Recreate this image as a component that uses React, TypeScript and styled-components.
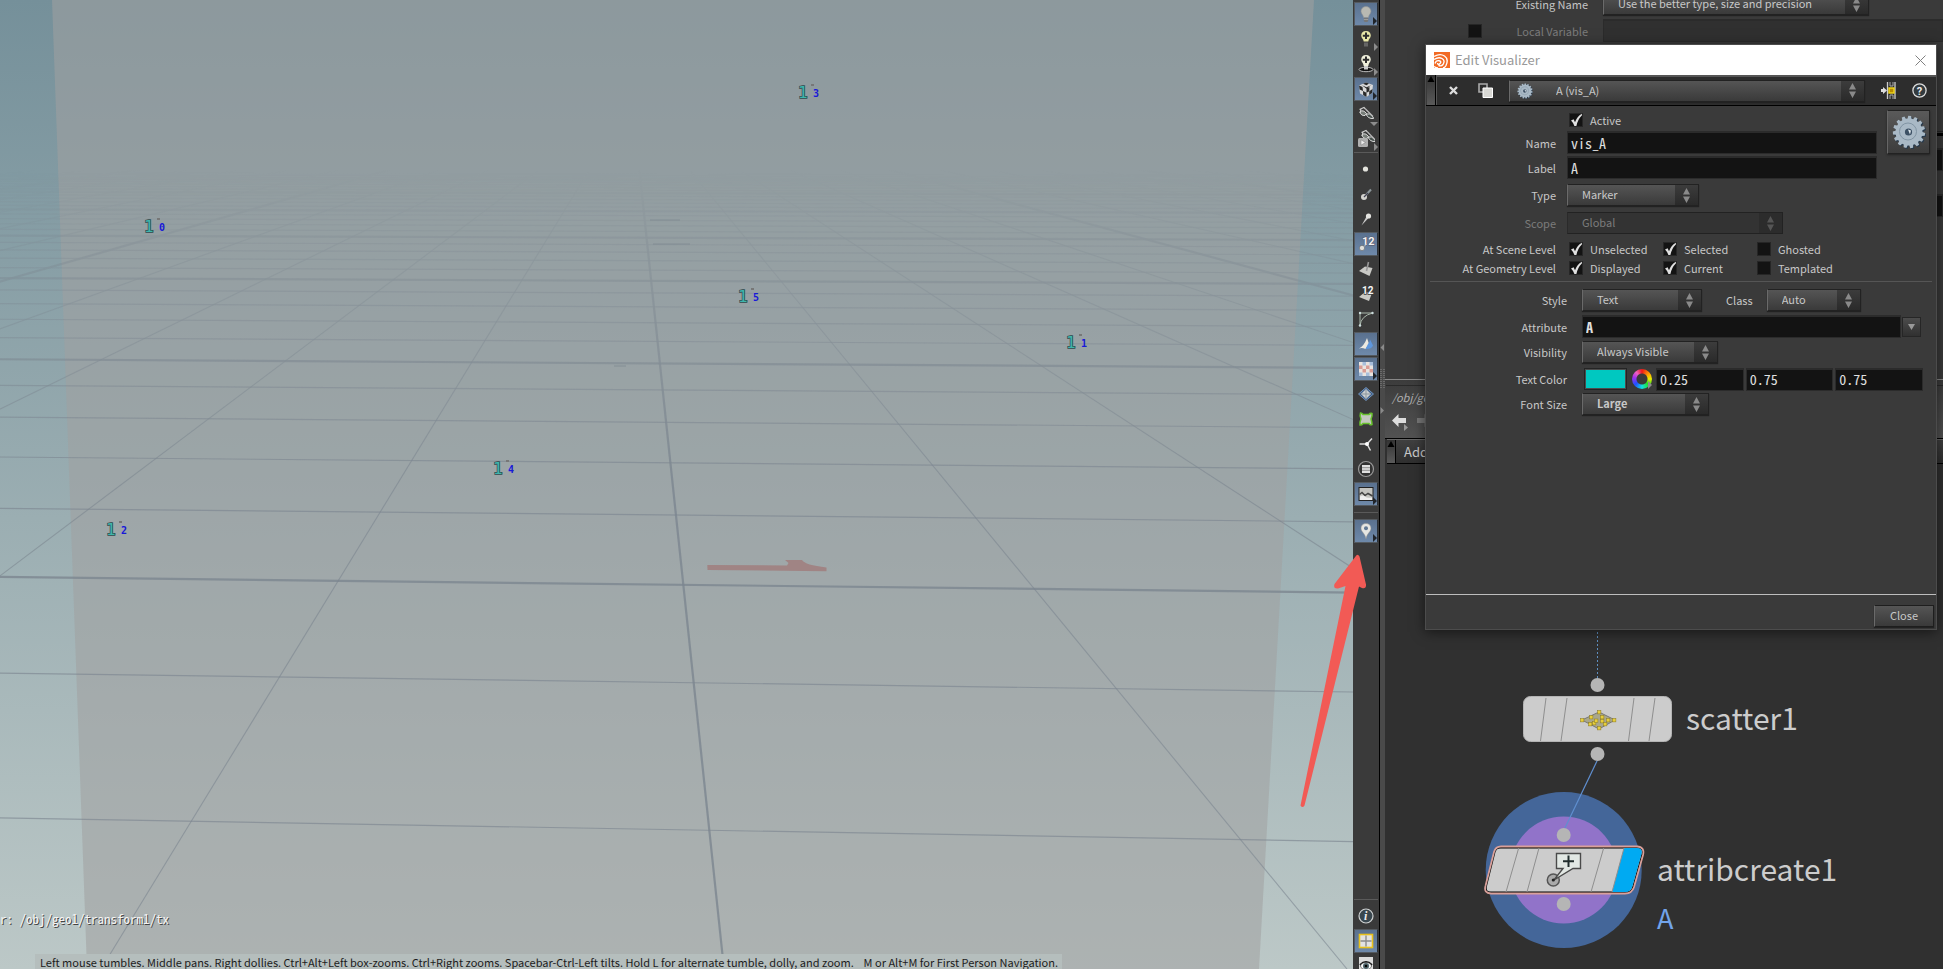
import React from 'react';
import styled, { createGlobalStyle, css } from 'styled-components';

const UI_FONT = '"Noto Sans CJK SC", "Open Sans", sans-serif';
const MONO_FONT = '"Noto Sans Mono CJK SC", "Liberation Mono", monospace';

const GlobalStyle = createGlobalStyle`
  * { box-sizing: border-box; }
  html, body, #root { height: 100%; }
  body { margin: 0; background: #3a3a3a; overflow: hidden; }
  button, input, select { font: inherit; color: inherit; margin: 0; padding: 0; border: 0; border-radius: 0; }
  svg { display: block; }
`;

/* ---------- page frame ---------- */

const Page = styled.div`
  position: relative;
  display: flex;
  height: 100vh;
  overflow: hidden;
  font-family: ${UI_FONT};
  font-size: 11px;
  line-height: 16px;
  color: #c8c8c8;
`;

const Viewport = styled.main`
  position: relative;
  flex: 1;
  min-width: 0;
  display: flex;
  flex-direction: column;
  justify-content: flex-end;
  overflow: hidden;
  background: linear-gradient(#75909a, #bcc8c7);
`;

const SceneDrawing = styled.svg`
  position: absolute;
  inset: 0;
  width: 100%;
  height: 100%;
`;

const PathReadout = styled.div`
  position: relative;
  margin-bottom: 27px;
  font-family: ${MONO_FONT};
  font-size: 13px;
  line-height: 16px;
  color: #f4f4f4;
  text-shadow: 1px 1px 0 #444;
  white-space: pre;
`;

const HintBar = styled.div`
  position: relative;
  align-self: flex-start;
  margin-left: 35px;
  padding: 2px 4px 0 5px;
  background: #b5bebd;
  color: #1c1c1c;
  line-height: 13px;
  white-space: pre;
`;

/* ---------- display toolbar ---------- */

const Toolbar = styled.nav`
  display: flex;
  flex-direction: column;
  gap: 1px;
  width: 26px;
  padding: 2px 1px 0;
  background: #3a3a3a;
  overflow: hidden;
`;

const ToolButton = styled.button<{ $on?: boolean; $cut?: boolean }>`
  position: relative;
  display: flex;
  align-items: flex-start;
  justify-content: center;
  flex: none;
  height: ${p => (p.$cut ? 15 : 24)}px;
  padding-top: 2px;
  background: transparent;
  ${p => p.$on && css`
    background: linear-gradient(#5a718f, #6e89aa);
    border: 1px solid #545a60;
    border-right-color: #2a3038;
    padding-top: 1px;
  `}
`;

const MenuTick = styled.i<{ $dark?: boolean; $down?: boolean }>`
  position: absolute;
  right: 0;
  bottom: 0;
  border: 4px solid transparent;
  border-left-color: ${p => (p.$dark ? '#20242a' : '#8c8c8c')};
  border-right-width: 0;
  ${p => p.$down && css`
    border: 4px solid transparent;
    border-top-color: #8c8c8c;
    border-bottom-width: 0;
  `}
`;

const ToolDivider = styled.hr<{ $loose?: boolean }>`
  flex: none;
  width: 24px;
  height: 1px;
  margin: ${p => (p.$loose ? '5px 0 5px' : '0 0 3px')};
  border: 0;
  background: #5a5a5a;
`;

const Spacer = styled.div`
  flex: 1;
`;

const Splitter = styled.div`
  display: flex;
  flex-direction: column;
  align-items: center;
  width: 6px;
  padding-top: 344px;
  border-left: 1px solid #000;
  background: #4a4a4a;
`;

/* ---------- right column ---------- */

const RightColumn = styled.aside`
  display: flex;
  flex-direction: column;
  width: 558px;
  background: #303030;
`;

const ParamPane = styled.section`
  flex: none;
  height: 379px;
  overflow: hidden;
  background: #3a3a3a;
`;

const ParamRow = styled.div<{ $top?: number; $height: number; $indent?: boolean }>`
  display: flex;
  align-items: center;
  height: ${p => p.$height}px;
  margin-top: ${p => p.$top || 0}px;
  padding-left: ${p => (p.$indent ? 218 : 0)}px;
`;

const ParamLabel = styled.label<{ $dim?: boolean }>`
  width: 106px;
  margin-right: 15px;
  text-align: right;
  color: ${p => (p.$dim ? '#7c7c7c' : '#c4c4c4')};
`;

const ParamIndent = styled.div`
  display: flex;
  justify-content: flex-end;
  width: 97px;
`;

const TabLine = styled.div`
  height: 5px;
  margin: 89px 0 0 218px;
  border-top: 1px solid #262626;
  border-bottom: 3px solid #000;
`;

const NetHeader = styled.header`
  flex: none;
  display: flex;
  flex-direction: column;
  height: 60px;
  border-top: 1px solid #888;
  border-bottom: 1px solid #000;
  background: linear-gradient(#3c3c3c, #525252);
`;

const NetPath = styled.a`
  margin: 5px 0 0 1px;
  padding: 3px 6px 0;
  height: 24px;
  border-top: 1px solid #2a2a2a;
  color: #b0b0b0;
  font-style: italic;
  text-decoration: none;
`;

const NavRow = styled.div`
  display: flex;
  align-items: center;
  gap: 8px;
  padding: 5px 7px 0;
`;

const PlainButton = styled.button`
  display: flex;
  background: transparent;
`;

const AddBar = styled.div`
  flex: none;
  display: flex;
  align-items: stretch;
  height: 25px;
  margin-left: 2px;
  border-bottom: 1px solid #000;
  border-top: 1px solid #666;
  background: linear-gradient(#404040, #2f2f2f);
  font-size: 13px;
`;

const Handle = styled.div`
  width: 9px;
  border-right: 1px solid #000;
  background: linear-gradient(#333, #5a5a5a);
`;

const AddMenu = styled.button`
  background: transparent;
  padding-left: 8px;
  line-height: 22px;
`;

const Network = styled.section`
  flex: 1;
  min-height: 0;
  background: #303030;
`;

const NetworkDrawing = styled.svg`
  width: 100%;
  height: 100%;
`;

/* ---------- dialog ---------- */

const Dialog = styled.section`
  position: absolute;
  top: 44px;
  right: 6px;
  width: 512px;
  border: 1px solid #4c4c4c;
  background: #3a3a3a;
  box-shadow: 0 2px 12px rgba(0, 0, 0, 0.55);
`;

const TitleBar = styled.header`
  display: flex;
  align-items: center;
  height: 30px;
  padding: 0 10px 0 8px;
  background: #fff;
`;

const Title = styled.h1`
  flex: 1;
  margin: 0 0 0 5px;
  font-size: 13px;
  line-height: 20px;
  font-weight: 400;
  color: #999;
`;

const ActionBar = styled.div`
  display: flex;
  height: 31px;
  padding-left: 1px;
  border-bottom: 1px solid #000;
`;

const Actions = styled.div`
  flex: 1;
  display: flex;
  align-items: center;
  padding: 0 9px 1px 12px;
  border-top: 2px solid #555;
  border-left: 1px solid #555;
  background: #2d2d2d;
`;

const ActionSelectSlot = styled.div`
  position: relative;
  flex: 1;
  margin: 0 16px;

  > svg {
    position: absolute;
    left: 8px;
    top: 3px;
    pointer-events: none;
  }
`;

const ActionGap = styled.div<{ $wide?: boolean }>`
  width: ${p => (p.$wide ? 20 : 16)}px;
`;

const Body = styled.form`
  min-height: 488px;
`;

const TopForm = styled.div`
  display: flex;
  align-items: flex-start;
  padding-top: 7px;
`;

const TopFields = styled.div`
  flex: 1;
`;

const GearButton = styled.button`
  display: flex;
  align-items: center;
  justify-content: center;
  width: 43px;
  height: 44px;
  margin: -3px 6px 0 10px;
  border: 1px solid #222;
  border-left-color: #666;
  background: linear-gradient(#5a5a5a, #3c3c3c);
  box-shadow: 0 1px 2px #222;
`;

const Row = styled.div<{ $height?: number; $gap?: number }>`
  display: flex;
  align-items: center;
  height: ${p => p.$height || 22}px;
  margin-top: ${p => p.$gap || 0}px;
`;

const RowLabel = styled.label<{ $wide?: boolean; $dim?: boolean }>`
  flex: none;
  width: ${p => (p.$wide ? 141 : 130)}px;
  margin-right: ${p => (p.$wide ? 15 : 11)}px;
  text-align: right;
  color: ${p => (p.$dim ? '#7c7c7c' : '#c8c8c8')};
`;

const InlineLabel = styled.label`
  margin: 0 14px 0 24px;
`;

const TextField = styled.input<{ $bold?: boolean }>`
  min-width: 0;
  flex: 1;
  height: 23px;
  padding: 0 2px 1px 3px;
  border: 1px solid #2b2b2b;
  border-top: 2px solid #2b2b2b;
  background: #131313;
  color: #e0e0e0;
  font-family: ${MONO_FONT};
  font-size: 14px;
  font-weight: ${p => (p.$bold ? 700 : 400)};
  outline: 0;

  &:disabled {
    background: #303030;
  }
`;

const SelectFrame = styled.div<{ $width?: number; $dim?: boolean }>`
  display: grid;
  grid-template-columns: 1fr 23px;
  flex: none;
  width: ${p => (p.$width ? `${p.$width}px` : '100%')};
  height: 22px;
  border: 1px solid #222;
  border-left-color: ${p => (p.$dim ? '#2a2a2a' : '#6a6a6a')};
  background: ${p => (p.$dim ? '#333' : 'linear-gradient(#555, #3a3a3a)')};
  box-shadow: ${p => (p.$dim ? 'none' : '0 1px 1px #222')};
  color: ${p => (p.$dim ? '#7c7c7c' : '#c8c8c8')};
`;

const NativeSelect = styled.select<{ $inset: number; $bold?: boolean }>`
  grid-area: 1 / 1 / 2 / 3;
  appearance: none;
  min-width: 0;
  padding: 0 0 2px ${p => p.$inset}px;
  background: transparent;
  font-weight: ${p => (p.$bold ? 700 : 400)};
  line-height: 18px;
  outline: 0;
  opacity: 1;
`;

const SpinArrows = styled.span<{ $dim?: boolean }>`
  grid-area: 1 / 2 / 2 / 3;
  display: flex;
  align-items: center;
  justify-content: center;
  background: ${p => (p.$dim ? '#2c2c2c' : 'linear-gradient(#3c3c3c, #2a2a2a)')};
  color: ${p => (p.$dim ? '#555' : '#8a8a8a')};
  pointer-events: none;
`;

const CheckLabel = styled.label`
  display: flex;
  align-items: center;
  gap: 7px;
  width: 94px;
  padding-left: 2px;
`;

const CheckCell = styled.span`
  display: grid;
  width: 14px;
  height: 14px;

  > * { grid-area: 1 / 1; }
  > svg { overflow: visible; pointer-events: none; }
`;

const CheckInput = styled.input`
  appearance: none;
  width: 14px;
  height: 14px;
  border: 1px solid #262626;
  background: #131313;
`;

const Rule = styled.hr`
  height: 1px;
  margin: 6px 4px 7px;
  border: 0;
  background: #555;
`;

const DropButton = styled.button`
  display: flex;
  align-items: center;
  justify-content: center;
  width: 19px;
  height: 20px;
  margin: 0 15px 0 1px;
  border: 1px solid #262626;
  background: linear-gradient(#4c4c4c, #303030);
`;

const Swatch = styled.button`
  width: 43px;
  height: 22px;
  margin: 0 5px 0 2px;
  border: 2px solid #4c4c4c;
  outline: 1px solid #242424;
  outline-offset: -1px;
  background: #00c8c0;
`;

const Wheel = styled.button`
  position: relative;
  width: 20px;
  height: 20px;
  margin-right: 4px;
  border-radius: 50%;
  background:
    radial-gradient(circle, #3a3a3a 5px, transparent 6px),
    conic-gradient(#f01818, #ffb000 60deg, #e8f000 90deg, #20e020 130deg, #10e0e0 180deg, #2050ff 230deg, #a030f0 280deg, #f060c0 320deg, #f01818);
`;

const ColorFields = styled.div`
  display: flex;
  gap: 2px;
  width: 267px;
`;

const Footer = styled.footer`
  display: flex;
  justify-content: flex-end;
  padding: 10px 2px 2px;
  border-top: 1px solid #bdbdbd;
`;

const CloseButton = styled.button`
  width: 60px;
  height: 22px;
  padding-bottom: 2px;
  border: 1px solid #1e1e1e;
  border-left-color: #6a6a6a;
  background: linear-gradient(#555, #3a3a3a);
  box-shadow: 0 1px 1px #222;
`;

const PointerArrow = styled.svg`
  position: absolute;
  top: 552px;
  right: 574px;
  pointer-events: none;
`;

/* ---------- small drawings ---------- */

const Arrows = () => (
  <svg width="7" height="15" viewBox="0 0 7 15" fill="currentColor">
    <path d="M3.5 0 7 6.5H0zM3.5 15 0 8.5h7z" />
  </svg>
);

const toothPath = (() => {
  const n = 15;
  let d = '';
  for (let i = 0; i < n; i++) {
    const at = (f: number, r: number) => {
      const a = ((i + f) / n) * Math.PI * 2;
      return `${(17 + Math.cos(a) * r).toFixed(2)} ${(17 + Math.sin(a) * r).toFixed(2)}`;
    };
    d += `${i ? 'L' : 'M'}${at(0, 13.5)}L${at(0.14, 16.2)}L${at(0.56, 16.2)}L${at(0.7, 13.5)}`;
  }
  return d + 'Z';
})();

const Gear = ({ size }: { size: number }) => (
  <svg width={size} height={size} viewBox="0 0 34 34">
    <path d={toothPath} transform="translate(1 1)" fill="#26394c" />
    <path d={toothPath} fill="#a9b9c6" />
    <circle cx="16" cy="16.5" r="8.5" fill="none" stroke="#8295a4" />
    <circle cx="16.5" cy="17" r="3.6" fill="#3c5064" />
    <path d="M16 14.5l3 1-1 4z" fill="#dfe8ee" />
  </svg>
);

const CheckMark = () => (
  <svg width="14" height="14" viewBox="0 0 14 14">
    <path d="M2 7.5 4.6 6.2 6 9.2Q8 3.5 12.8 0.8L13 2.2Q8.6 6.6 7.4 13H5.400Q4.400 9.800 2 7.500z" fill="#e0e0e0" />
  </svg>
);

const TriUp = () => (
  <svg width="8" height="10" viewBox="0 0 8 10"><path d="M4 1 7.5 7H.5z" fill="#000" /></svg>
);

const Glass = () => (
  <g>
    <path d="M2.500 4.500 7 2.500 8.500 4M4 4.500 3 8" stroke="#ccc" strokeWidth="1.200" />
    <path d="M3 7Q6 4 9.500 8.500L8 10.500Q4 11 3 7z" fill="#777d78" stroke="#ddd" />
    <path d="M9 9Q13 7.500 16 12L16.500 13.500Q11 14 9 9z" fill="#46504c" stroke="#ddd" />
    <path d="M8.500 4 16 11.500" stroke="#bbb" strokeWidth="1.200" />
  </g>
);

const icons: Record<string, React.ReactNode> = {
  bulb: (
    <>
      <path d="M9 1.500c3 0 5 2.200 5 4.800 0 2.500-2.300 3.600-2.500 6.200h-5C6.300 9.900 4 8.800 4 6.300 4 3.700 6 1.500 9 1.500z" fill="#b9b9b2" stroke="#8b8f90" strokeWidth=".6" />
      <path d="M6.800 13h4.400v3l-1 1H7.800l-1-1z" fill="#777" />
      <path d="M6.800 14.500h4.400" stroke="#aaa" strokeWidth=".7" />
    </>
  ),
  bulbAdd: (
    <>
      <path d="M9 1c3 0 4.800 2 4.800 4.500S11.500 9 11.300 11.500H6.700C6.500 9 4.200 8 4.200 5.500S6 1 9 1z" fill="#e9e8a8" />
      <path d="M9 2.500v6.500M5.800 5.700h6.400" stroke="#2e2e2e" strokeWidth="2" />
      <path d="M7 12.500h4v4H7z" fill="#666" />
    </>
  ),
  bulbRing: (
    <>
      <ellipse cx="9" cy="14.500" rx="7" ry="2.200" fill="#111" stroke="#bbb" />
      <path d="M9 0c3 0 4.800 2 4.800 4.500S11.500 8 11.300 11H6.700C6.500 8 4.200 7 4.200 4.500S6 0 9 0z" fill="#f0f0dc" />
      <path d="M9 1.500V8M5.800 4.700h6.400" stroke="#2e2e2e" strokeWidth="2" />
      <path d="M7 11h4v3.500H7z" fill="#ccc" />
    </>
  ),
  cube: (
    <>
      <path d="M9 2.500 16 5 15 13 9.500 17 3 13.500 2 5.500z" fill="#d9d9d9" />
      <path d="M6 3.700 9 2.500 12 3.600 9.500 5.200zM2 5.500 5.500 7 6 11 2.600 9.500zM6 11 9.500 12.800V17L6.200 15.100zM9.500 8.500l3-1.500-.2 4.200-2.800 1.600zM12.300 11.200 15.500 9 15 13l-2.900 2zM5 5.300 9.500 7.300 14 5.300 9.500 8.800z" fill="#2a2a2a" />
    </>
  ),
  glasses: <Glass />,
  glassesPlay: (
    <>
      <g transform="translate(2 -2)"><Glass /></g>
      <rect x="1" y="8" width="10" height="9" rx="1.500" fill="#b0b0b0" />
      <path d="M4 9.800 8.500 12.500 4 15.200z" fill="#eee" stroke="#777" strokeWidth=".5" />
    </>
  ),
  point: <circle cx="8.500" cy="9" r="2.600" fill="#e4e4de" />,
  pointNormal: (
    <>
      <path d="M8 11 14 4.500" stroke="#8b9599" strokeWidth="2" />
      <circle cx="7" cy="12" r="3" fill="#d4d4d0" />
      <path d="M7 12 11 8" stroke="#445" strokeWidth="1.300" />
    </>
  ),
  pointTrail: (
    <>
      <path d="M4.500 15.500 9.500 6.500l2 1.500z" fill="#ccc" />
      <circle cx="11.500" cy="6" r="2.600" fill="#e4e4e0" />
    </>
  ),
  pointNumber: (
    <>
      <text x="5" y="9.500" fontSize="11" fontWeight="700" fill="#f2f2f2" stroke="#556" strokeWidth="1" paintOrder="stroke" fontFamily="Roboto, sans-serif">12</text>
      <circle cx="5" cy="13" r="2.600" fill="#e0e0dc" stroke="#555" strokeWidth=".5" />
      <path d="M7 11.500 9.500 9" stroke="#ccc" />
    </>
  ),
  primNormal: (
    <>
      <path d="M2 11 8 6.500 15.500 8 12.500 16z" fill="#c9c9c5" />
      <path d="M9.500 11 11.500 2" stroke="#999" strokeWidth="1.600" />
    </>
  ),
  primNumber: (
    <>
      <path d="M2 12 8 7l7 1-3 8z" fill="#c9c9c5" />
      <text x="5" y="9" fontSize="10" fontWeight="700" fill="#f6f6f6" stroke="#3a3a3a" strokeWidth="1.500" paintOrder="stroke" fontFamily="Roboto, sans-serif">12</text>
    </>
  ),
  hull: (
    <>
      <path d="M3 15.500V3h12.500M3 15.500Q4 6 15.500 3" fill="none" stroke="#a9b7ab" strokeWidth="1" />
      <circle cx="3" cy="3" r="1.200" fill="#cdd" /><circle cx="15.500" cy="3" r="1.200" fill="#cdd" /><circle cx="3" cy="15.500" r="1.200" fill="#cdd" />
    </>
  ),
  shade: (
    <>
      <path d="M2 13.500Q7 11 10 3L12 9 8.500 14Q5 12.500 2 13.500z" fill="#ece9e0" />
      <path d="M8.500 14 11 9Q13 7 13 4.500L16 10.500Q15 14 8.500 14z" fill="#5d96dd" />
    </>
  ),
  checker: (
    <>
      <rect x="2" y="2" width="14" height="14" fill="#e9e4e0" />
      <path d="M2 5.500h3.500V9H2zM9 5.500h3.500V9H9zM5.500 9H9v3.500H5.500zM12.500 9H16v3.500h-3.500z" fill="#d99c95" />
      <path d="M5.500 2H9v3.500H5.500zM12.500 2H16v3.500h-3.500zM2 12.500h3.500V16H2zM9 12.500h3.500V16H9z" fill="#a8bedb" />
    </>
  ),
  diamond: (
    <>
      <path d="M9 2.500 16.500 9 9 15.500 1.500 9z" fill="#3f5f88" stroke="#7fa5d2" strokeWidth=".8" />
      <path d="M9 4 14 9 9 14 4 9z" fill="#c9ced0" />
      <path d="M9 4.500v9M4.500 9h9" stroke="#8c979e" />
    </>
  ),
  patch: (
    <path d="M3.500 3Q5 3 6 4.500H12Q13 3 15 3.500 15.500 6 14 9 15 12 15 14.500 13 15.500 12 13.500H6Q5 15 3 15 2.500 12 4 9 2.500 6 3.500 3z" fill="#c4c9bf" stroke="#69c22e" strokeWidth="1.500" />
  ),
  axes: (
    <>
      <path d="M10 9 15 3.500M10 9 13.500 15.500M10 9H2.500" stroke="#ddd" strokeWidth="1.500" />
      <circle cx="10" cy="9" r="2" fill="#fff" />
    </>
  ),
  list: (
    <>
      <circle cx="9" cy="9" r="7.500" fill="#333" stroke="#999" strokeWidth="1.200" />
      <path d="M5 5h8v8H5z" fill="#e0e0e0" />
      <path d="M5 7.700h8M5 10.300h8" stroke="#777" strokeWidth=".8" />
    </>
  ),
  image: (
    <>
      <rect x="2" y="2.500" width="14" height="13" fill="#c4c4c0" stroke="#222" />
      <path d="M2.500 9.500 5 7.500l3 3 3-2 4.500 2.500" fill="none" stroke="#444" strokeWidth="1.500" />
      <path d="M3 11.500q3-2 5 0t7 1v2.500H3z" fill="#eee" />
    </>
  ),
  pin: (
    <>
      <path d="M9 1.500c3 0 5 2 5 4.800C14 10 10 11 9 17 8 11 4 10 4 6.300 4 3.500 6 1.500 9 1.500z" fill="#e6e6e2" stroke="#8a8a8a" strokeWidth=".5" />
      <circle cx="9" cy="6.300" r="2" fill="#607894" />
    </>
  ),
  info: (
    <>
      <circle cx="9" cy="9" r="7" fill="#39474f" stroke="#cfd2d2" strokeWidth="1.200" />
      <text x="7" y="13" fontSize="12" fontStyle="italic" fontWeight="700" fill="#eee" fontFamily="Liberation Serif, serif">i</text>
    </>
  ),
  layout: (
    <>
      <rect x="2.500" y="2.500" width="13" height="13" fill="#e2e2e2" stroke="#e8c11c" strokeWidth="1.600" />
      <path d="M9 3.500v11M3.500 9h11" stroke="#8b8b8b" strokeWidth="1.400" />
    </>
  ),
  eye: (
    <>
      <rect x="2" y="0" width="14" height="16" fill="#dcdcdc" />
      <path d="M3 8q6-6 12 0" fill="none" stroke="#111" strokeWidth="1.800" />
      <ellipse cx="9" cy="9" rx="5.500" ry="3.500" fill="#f8f8f8" stroke="#333" strokeWidth=".6" />
      <circle cx="9" cy="9" r="3" fill="#4c6268" /><circle cx="9" cy="9" r="1.300" fill="#000" />
    </>
  ),
};

type ToolDef = { id: string; name: string; on?: boolean; tick?: 'side' | 'down'; cut?: boolean };

const lightTools: ToolDef[] = [
  { id: 'bulb', name: 'Lighting', on: true, tick: 'side' },
  { id: 'bulbAdd', name: 'Add light', tick: 'side' },
  { id: 'bulbRing', name: 'Environment light', tick: 'side' },
  { id: 'cube', name: 'Materials', on: true, tick: 'side' },
  { id: 'glasses', name: 'Viewing', tick: 'down' },
  { id: 'glassesPlay', name: 'Playback viewing', tick: 'side' },
];
const geometryTools: ToolDef[] = [
  { id: 'point', name: 'Points' },
  { id: 'pointNormal', name: 'Point normals' },
  { id: 'pointTrail', name: 'Point trails' },
  { id: 'pointNumber', name: 'Point numbers', on: true },
  { id: 'primNormal', name: 'Primitive normals' },
  { id: 'primNumber', name: 'Primitive numbers' },
  { id: 'hull', name: 'Hulls' },
  { id: 'shade', name: 'Shading', on: true },
  { id: 'checker', name: 'Backgrounds', on: true, tick: 'side' },
  { id: 'diamond', name: 'Guides' },
  { id: 'patch', name: 'Patches' },
  { id: 'axes', name: 'Axes' },
  { id: 'list', name: 'Group list' },
  { id: 'image', name: 'Image planes', on: true, tick: 'side' },
];
const pinTools: ToolDef[] = [{ id: 'pin', name: 'Visualizers', on: true, tick: 'side' }];
const bottomTools: ToolDef[] = [
  { id: 'info', name: 'Info' },
  { id: 'layout', name: 'Layout', on: true },
  { id: 'eye', name: 'Display options', cut: true },
];

const ToolGroup = ({ tools }: { tools: ToolDef[] }) => (
  <>
    {tools.map(t => (
      <ToolButton key={t.id} type="button" aria-label={t.name} $on={t.on} $cut={t.cut}>
        <svg width="18" height="20" viewBox="0 -1 18 20" fill="none">{icons[t.id]}</svg>
        {t.tick && <MenuTick $dark={t.on} $down={t.tick === 'down'} />}
      </ToolButton>
    ))}
  </>
);

/* ---------- scene ---------- */

const HORIZON = 100;
const VANISH_X = 632;

const crossLines = Array.from({ length: 36 }, (_, n) => {
  const drop = 1 / (0.001393 + 0.000352 * n);
  return { n, y0: HORIZON + drop, y1: HORIZON + drop * 1.033, major: n % 5 === 2 };
});
const depthLines = Array.from({ length: 81 }, (_, i) => {
  const k = i - 40;
  return { k, x: 724 + k * 623, major: k % 5 === 0 };
});

const markers = [
  { n: 3, x: 815, y: 93 },
  { n: 0, x: 161, y: 227 },
  { n: 5, x: 755, y: 297 },
  { n: 1, x: 1083, y: 343 },
  { n: 4, x: 510, y: 469 },
  { n: 2, x: 123, y: 530 },
];

const Scene = () => (
  <SceneDrawing viewBox="0 0 1353 969" preserveAspectRatio="xMidYMid slice">
    <defs>
      <linearGradient id="fade" x1="0" y1="170" x2="0" y2="480" gradientUnits="userSpaceOnUse">
        <stop offset="0" stopColor="#fff" stopOpacity="0" />
        <stop offset=".25" stopColor="#fff" stopOpacity=".4" />
        <stop offset="1" stopColor="#fff" />
      </linearGradient>
      <mask id="distance" maskUnits="userSpaceOnUse" x="0" y="0" width="1353" height="969">
        <rect width="1353" height="969" fill="url(#fade)" />
      </mask>
    </defs>
    <path d="M52 0H1314L1259 969H87z" fill="rgb(161,160,161)" fillOpacity=".55" />
    <g mask="url(#distance)" stroke="#7c8690">
      {crossLines.map(l => (
        <line key={l.n} x1="0" x2="1353" y1={l.y0} y2={l.y1} strokeWidth={l.major ? 2.2 : 1.2} strokeOpacity={l.major ? 0.8 : 0.65} />
      ))}
      {depthLines.map(l => (
        <line key={l.k} x1={VANISH_X} y1={HORIZON} x2={l.x} y2="969" strokeWidth={l.major ? 2.2 : 1.1} strokeOpacity={l.major ? 0.8 : 0.6} />
      ))}
    </g>
    <path d="M650 220h30M653 244h37M614 366h12" stroke="#7c8890" strokeOpacity=".7" />
    <path d="M707.300 565 787 565.500 788.500 563 785 560H802Q805 565 826.500 567.500V571.300L707.500 570z" fill="#a08484" />
    {markers.map(m => (
      <g key={m.n} fontFamily="DejaVu Sans Mono, monospace">
        <rect x={m.x - 4} y={m.y - 9} width="3" height="2" fill="#777" />
        <text x={m.x - 17} y={m.y + 5} fontSize="16" fill="#3fb5ac" stroke="#2b4a4c" strokeWidth="1.500" paintOrder="stroke">1</text>
        <text x={m.x - 2} y={m.y + 4} fontSize="10" fontWeight="700" fill="#1818d8">{m.n}</text>
      </g>
    ))}
  </SceneDrawing>
);

const scatterPoints = [[0, 9], [9, 6], [17, 1], [17, 17], [20, 6], [12, 12], [14, 9.5], [20, 10], [26, 9], [32, 9], [23, 13], [8, 13]];

const NetworkGraph = () => (
  <NetworkDrawing viewBox="0 0 558 505" preserveAspectRatio="xMaxYMin slice">
    <defs>
      <clipPath id="tile">
        <path d="M116 384H252Q258 384 256.500 390L247.500 422Q246 428 240 428H106Q100.500 428 102 422L110.500 388Q112 384 116 384z" />
      </clipPath>
    </defs>
    <path d="M212.500 160V214" stroke="#5f8fc0" strokeWidth="1" strokeDasharray="2 2" />
    <g fill="#b5b5b5">
      <circle cx="212.500" cy="221" r="7" />
      <circle cx="212.500" cy="290" r="7" />
    </g>
    <rect x="138.500" y="232.500" width="148" height="45" rx="7" fill="#ccc" stroke="#b4b4b4" />
    <path d="M161 234 155.500 277M182 234 176 277M249 234 243.500 277M270 234 264 277" stroke="#8e8e8e" />
    <g transform="translate(197 247)">
      <path d="M0 9 17 1 33 9 17 18z" fill="#a9a78c" stroke="#777" />
      {scatterPoints.map(([x, y], i) => (
        <rect key={i} x={x - 1.5} y={y - 1.5} width="3.400" height="3.400" fill="#e8cf3a" stroke="#8a7a22" strokeWidth=".5" />
      ))}
    </g>
    <circle cx="178.700" cy="406" r="78" fill="#446699" />
    <circle cx="178.700" cy="406" r="53.500" fill="#9173c9" />
    <path d="M212 297 179.500 365" stroke="#5f8fd0" strokeWidth="1.200" />
    <g fill="#b5b5b5">
      <circle cx="178.700" cy="371" r="7" />
      <circle cx="178.700" cy="440" r="7" />
    </g>
    <path d="M116 382.500H252Q260 383 258 391L249 423Q247 429.500 240 429.500H106Q98.500 429 100.500 422L109 388Q110.500 382.500 116 382.500z" fill="#000" stroke="#d9a09a" strokeWidth="1.800" />
    <g clipPath="url(#tile)">
      <rect x="95" y="384.500" width="170" height="43" fill="#ccc" />
      <path d="M239 384H262V428H227z" fill="#00aaf2" />
      <path d="M133.700 384 121 428M154 384 142 428M218.700 384 206 428M239 384 227 428" stroke="#8e8e8e" />
    </g>
    <circle cx="168.300" cy="416" r="6" fill="#aaa" stroke="#555" strokeWidth="1.500" />
    <path d="M171.500 389.500H195.500V404.500H188L169 416 178 404.500H171.500z" fill="#e2e8e4" stroke="#4a4a4a" strokeWidth="1.400" />
    <path d="M183.500 391.500V403M178 397.200H189" stroke="#222e2e" strokeWidth="2" />
    <circle cx="168.300" cy="416" r="1.600" fill="#222" />
    <g fontFamily='"Noto Sans CJK SC", sans-serif' fill="#ccc">
      <text x="301" y="266" fontSize="30">scatter1</text>
      <text x="272" y="417" fontSize="30">attribcreate1</text>
      <text x="272" y="465" fontSize="27" fill="#72a4ea">A</text>
    </g>
  </NetworkDrawing>
);

/* ---------- controls ---------- */

type SelectProps = { id: string; value: string; width?: number; inset?: number; dim?: boolean; bold?: boolean; label?: string };

const Select = ({ id, value, width, inset = 14, dim, bold, label }: SelectProps) => (
  <SelectFrame $width={width} $dim={dim}>
    <NativeSelect id={id} aria-label={label} $inset={inset} $bold={bold} disabled={dim} defaultValue={value}>
      <option>{value}</option>
    </NativeSelect>
    <SpinArrows $dim={dim}><Arrows /></SpinArrows>
  </SelectFrame>
);

const Check = ({ name, on }: { name: string; on?: boolean }) => {
  const [checked, setChecked] = React.useState(!!on);
  return (
    <CheckLabel>
      <CheckCell>
        <CheckInput type="checkbox" checked={checked} onChange={e => setChecked(e.target.checked)} />
        {checked && <CheckMark />}
      </CheckCell>
      {name}
    </CheckLabel>
  );
};

const EditVisualizer = () => (
  <Dialog role="dialog" aria-label="Edit Visualizer">
    <TitleBar>
      <svg width="16" height="16" viewBox="0 0 16 16" fill="none">
        <rect width="16" height="16" fill="#f26a24" />
        <g stroke="#fff" strokeWidth="1.400">
          <path d="M0 4.500Q6 1 10.500 4T12 13.500Q11 15.500 9 16" />
          <path d="M0 7.500Q4.500 4.500 8 6.500T9 12.500Q7.500 14.500 4.500 13.500" />
          <path d="M1 11.500Q2 8.200 5 8.700T6 11.500 3.500 11" />
          <path d="M0 14.500Q2 16 4 16" />
        </g>
      </svg>
      <Title>Edit Visualizer</Title>
      <PlainButton type="button" aria-label="Close window">
        <svg width="11" height="11" viewBox="0 0 11 11"><path d="M.5.5l10 10M10.500.5l-10 10" stroke="#808080" /></svg>
      </PlainButton>
    </TitleBar>
    <ActionBar>
      <Handle><TriUp /></Handle>
      <Actions>
        <PlainButton type="button" aria-label="Delete">
          <svg width="9" height="9" viewBox="0 0 9 9"><path d="M1 1l7 7M8 1 1 8" stroke="#ddd" strokeWidth="2.400" /></svg>
        </PlainButton>
        <ActionGap $wide />
        <PlainButton type="button" aria-label="Duplicate">
          <svg width="15" height="15" viewBox="0 0 15 15">
            <path d="M1 1h8v8H1z" fill="none" stroke="#aaa" strokeWidth="1.600" />
            <path d="M5 5h9.500v9.500H5z" fill="#d8d8d4" stroke="#fff" />
          </svg>
        </PlainButton>
        <ActionSelectSlot>
          <Select id="visualizer" label="Visualizer" value="A (vis_A)" inset={46} />
          <Gear size={16} />
        </ActionSelectSlot>
        <PlainButton type="button" aria-label="Show in toolbar">
          <svg width="15" height="17" viewBox="0 0 15 17">
            <path d="M0 7h2V5l4 3.500L2 12v-2H0z" fill="#ddd" />
            <path d="M6.500 0v17M14 0v17" stroke="#ccc" strokeWidth="1.300" />
            <path d="M9 0v4h3V0M9 17v-4h3v4" fill="none" stroke="#aaa" />
            <rect x="8" y="6" width="5" height="5" fill="#b78b00" stroke="#f4d91c" strokeWidth="1.400" />
          </svg>
        </PlainButton>
        <ActionGap />
        <PlainButton type="button" aria-label="Help">
          <svg width="15" height="15" viewBox="0 0 15 15">
            <circle cx="7.500" cy="7.500" r="6.600" fill="#333b3f" stroke="#ddd" strokeWidth="1.300" />
            <text x="7.500" y="11.500" textAnchor="middle" fontSize="11" fontWeight="700" fill="#eee" fontFamily="Roboto, sans-serif">?</text>
          </svg>
        </PlainButton>
      </Actions>
    </ActionBar>
    <Body onSubmit={e => e.preventDefault()}>
      <TopForm>
        <TopFields>
          <Row $height={14}><RowLabel as="span" /><Check name="Active" on /></Row>
          <Row $height={23} $gap={4}><RowLabel htmlFor="name">Name</RowLabel><TextField id="name" defaultValue="vis_A" /></Row>
          <Row $height={23} $gap={2}><RowLabel htmlFor="label">Label</RowLabel><TextField id="label" defaultValue="A" /></Row>
          <Row $gap={5}><RowLabel htmlFor="type">Type</RowLabel><Select id="type" value="Marker" width={132} /></Row>
          <Row $gap={6}><RowLabel htmlFor="scope" $dim>Scope</RowLabel><Select id="scope" value="Global" width={216} dim /></Row>
          <Row $height={14} $gap={8}>
            <RowLabel as="span">At Scene Level</RowLabel>
            <Check name="Unselected" on /><Check name="Selected" on /><Check name="Ghosted" />
          </Row>
          <Row $height={14} $gap={5}>
            <RowLabel as="span">At Geometry Level</RowLabel>
            <Check name="Displayed" on /><Check name="Current" on /><Check name="Templated" />
          </Row>
        </TopFields>
        <GearButton type="button" aria-label="Visualizer icon"><Gear size={34} /></GearButton>
      </TopForm>
      <Rule />
      <Row>
        <RowLabel $wide htmlFor="style">Style</RowLabel><Select id="style" value="Text" width={120} />
        <InlineLabel htmlFor="class">Class</InlineLabel><Select id="class" value="Auto" width={94} />
      </Row>
      <Row $height={23} $gap={4}>
        <RowLabel $wide htmlFor="attribute">Attribute</RowLabel><TextField id="attribute" defaultValue="A" $bold />
        <DropButton type="button" aria-label="Choose attribute">
          <svg width="7" height="6" viewBox="0 0 7 6"><path d="M0 0h7L3.500 6z" fill="#999" /></svg>
        </DropButton>
      </Row>
      <Row $gap={3}><RowLabel $wide htmlFor="visibility">Visibility</RowLabel><Select id="visibility" value="Always Visible" width={136} /></Row>
      <Row $height={24} $gap={4}>
        <RowLabel $wide htmlFor="red">Text Color</RowLabel>
        <Swatch type="button" aria-label="Color swatch" />
        <Wheel type="button" aria-label="Color wheel"><MenuTick /></Wheel>
        <ColorFields>
          <TextField id="red" defaultValue="0.25" />
          <TextField aria-label="Green" defaultValue="0.75" />
          <TextField aria-label="Blue" defaultValue="0.75" />
        </ColorFields>
      </Row>
      <Row $gap={2}><RowLabel $wide htmlFor="fontsize">Font Size</RowLabel><Select id="fontsize" value="Large" width={127} bold /></Row>
    </Body>
    <Footer><CloseButton type="button">Close</CloseButton></Footer>
  </Dialog>
);

export default function App() {
  return (
    <Page>
      <GlobalStyle />
      <Viewport>
        <Scene />
        <PathReadout>r: /obj/geo1/transform1/tx</PathReadout>
        <HintBar>Left mouse tumbles. Middle pans. Right dollies. Ctrl+Alt+Left box-zooms. Ctrl+Right zooms. Spacebar-Ctrl-Left tilts. Hold L for alternate tumble, dolly, and zoom.    M or Alt+M for First Person Navigation.</HintBar>
      </Viewport>
      <Toolbar>
        <ToolGroup tools={lightTools} />
        <ToolDivider />
        <ToolGroup tools={geometryTools} />
        <ToolDivider $loose />
        <ToolGroup tools={pinTools} />
        <Spacer />
        <ToolDivider />
        <ToolGroup tools={bottomTools} />
      </Toolbar>
      <Splitter>
        <svg width="5" height="70" viewBox="0 0 5 70" fill="#8a8a8a">
          <path d="M4 0v7L.5 3.500zM.5 63v7L4 66.500z" />
          <path d="M1 25v20M4 25v20" stroke="#8a8a8a" strokeDasharray="1 1" />
        </svg>
      </Splitter>
      <RightColumn>
        <ParamPane>
          <ParamRow $height={22} $top={-7}>
            <ParamIndent />
            <ParamLabel htmlFor="existing">Existing Name</ParamLabel>
            <Select id="existing" value="Use the better type, size and precision" width={266} />
          </ParamRow>
          <ParamRow $height={23} $top={4}>
            <ParamIndent><CheckInput type="checkbox" aria-label="Use local variable" /></ParamIndent>
            <ParamLabel $dim htmlFor="localvar">Local Variable</ParamLabel>
            <TextField id="localvar" disabled />
          </ParamRow>
          <TabLine />
          <ParamRow $height={23} $top={12} $indent><TextField aria-label="Value" /></ParamRow>
          <ParamRow $height={23} $top={23} $indent><TextField aria-label="String" /></ParamRow>
        </ParamPane>
        <NetHeader>
          <NetPath href="#">/obj/geo1</NetPath>
          <NavRow>
            <PlainButton type="button" aria-label="Back">
              <svg width="17" height="18" viewBox="0 0 17 18">
                <path d="M0 6.500 6.500 0v4H14v5H6.500v4z" fill="#ddd" /><path d="M12 10v7l4-3.500z" fill="#999" />
              </svg>
            </PlainButton>
            <PlainButton type="button" aria-label="Forward">
              <svg width="14" height="18" viewBox="0 0 14 18"><path d="M14 6.500 7.500 0v4H0v5h7.500v4z" fill="#777" /></svg>
            </PlainButton>
          </NavRow>
        </NetHeader>
        <AddBar><Handle><TriUp /></Handle><AddMenu type="button">Add</AddMenu></AddBar>
        <Network><NetworkGraph /></Network>
      </RightColumn>
      <EditVisualizer />
      <PointerArrow width="70" height="258" viewBox="0 0 70 258">
        <path d="M56.500 4.500Q58.500 1 60.500 4.500L67 32.500Q67.500 37 63 36L60 34.500 5.500 253.500Q3.500 256.500 1.500 253.500L46.500 34 39 36.500Q34 37 35.500 32z" fill="#f25a55" />
      </PointerArrow>
    </Page>
  );
}
